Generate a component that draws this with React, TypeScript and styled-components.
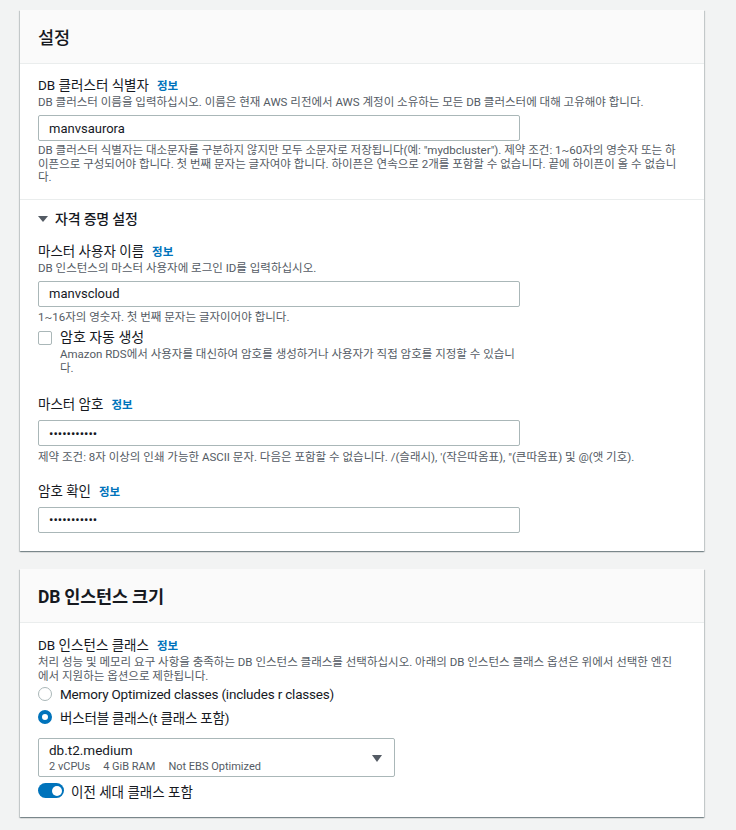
import React from 'react';
import styled, { createGlobalStyle } from 'styled-components';

const GlobalStyle = createGlobalStyle`
  html, body {
    margin: 0;
    padding: 0;
    background: #f2f3f3;
  }
  body {
    font-family: Roboto, 'Noto Sans CJK KR', sans-serif;
    color: #16191f;
  }
`;

const Page = styled.div`
  padding: 10px 32px 13px 20px;
  display: flex;
  flex-direction: column;
  gap: 18px;
`;

const Card = styled.section`
  background: #ffffff;
  box-shadow: 0 1px 1px 0 rgba(0, 28, 36, 0.3), 1px 1px 1px 0 rgba(0, 28, 36, 0.15),
    -1px 1px 1px 0 rgba(0, 28, 36, 0.15);
`;

const CardHeader = styled.header`
  height: 53px;
  background: #fafafa;
  border-bottom: 1px solid #eaeded;
  display: flex;
  align-items: center;
  padding: 0 18px;
`;

const CardTitle = styled.h2<{ light?: boolean }>`
  margin: 0;
  font-size: 17.5px;
  font-weight: ${p => (p.light ? 500 : 700)};
  letter-spacing: -0.2px;
`;

const Section = styled.div<{ divided?: boolean; top?: number; bottom?: number }>`
  padding: ${p => p.top ?? 12}px 18px ${p => p.bottom ?? 14}px;
  border-top: ${p => (p.divided ? '1px solid #eaeded' : 'none')};
`;

const Expander = styled.div`
  display: flex;
  align-items: center;
  gap: 7px;
  font-size: 14px;
  font-weight: 500;
  line-height: 20px;
  color: #16191f;
  letter-spacing: -0.2px;
`;

const Caret = styled.span`
  width: 0;
  height: 0;
  border-left: 5px solid transparent;
  border-right: 5px solid transparent;
  border-top: 6px solid #545b64;
`;

const Field = styled.div<{ gap?: number }>`
  margin-top: ${p => p.gap ?? 0}px;
  display: flex;
  flex-direction: column;
`;

const Label = styled.div`
  font-size: 13.5px;
  line-height: 18px;
  display: flex;
  align-items: baseline;
  gap: 8px;
`;

const Info = styled.a`
  font-size: 11.5px;
  font-weight: 700;
  color: #0073bb;
  text-decoration: none;
`;

const Desc = styled.div<{ wrap?: number }>`
  font-size: 11.5px;
  line-height: 14px;
  color: #545b64;
  max-width: ${p => p.wrap ?? 650}px;
`;

const Help = styled.div<{ wrap?: number; top?: number }>`
  margin-top: ${p => p.top ?? 4}px;
  font-size: 11.5px;
  line-height: 13.5px;
  color: #545b64;
  max-width: ${p => p.wrap ?? 650}px;
`;

const Input = styled.input`
  margin-top: 6px;
  box-sizing: border-box;
  width: 482px;
  height: 26px;
  border: 1px solid #aab7b8;
  border-radius: 2px;
  padding: 0 10px;
  font-family: Roboto, 'Noto Sans CJK KR', sans-serif;
  font-size: 13px;
  color: #16191f;
  outline: none;
`;

const CheckRow = styled.label`
  margin-top: 4px;
  display: flex;
  gap: 8px;
  align-items: flex-start;
`;

const Box = styled.span`
  margin-top: 3px;
  width: 14px;
  height: 14px;
  box-sizing: border-box;
  border: 1px solid #aab7b8;
  border-radius: 2px;
  flex-shrink: 0;
`;

const CheckText = styled.div`
  display: flex;
  flex-direction: column;
  width: 462px;
`;

const CheckLabel = styled.div`
  font-size: 14px;
  line-height: 18px;
`;

const Radios = styled.div`
  margin-top: 1px;
  display: flex;
  flex-direction: column;
  gap: 3px;
`;

const RadioRow = styled.label`
  display: flex;
  align-items: center;
  gap: 8px;
  height: 20px;
  font-size: 13.5px;
  letter-spacing: -0.2px;
`;

const Radio = styled.span<{ checked?: boolean }>`
  width: 14px;
  height: 14px;
  box-sizing: border-box;
  border-radius: 50%;
  border: ${p => (p.checked ? '4px solid #0073bb' : '1px solid #aab7b8')};
  background: #fff;
  flex-shrink: 0;
`;

const Select = styled.div`
  margin-top: 11px;
  box-sizing: border-box;
  width: 357px;
  height: 39px;
  border: 1px solid #aab7b8;
  border-radius: 2px;
  padding: 2px 10px 0;
  display: flex;
  align-items: center;
  justify-content: space-between;
`;

const SelectMain = styled.div`
  display: flex;
  flex-direction: column;
`;

const SelectValue = styled.div`
  font-size: 13.5px;
  line-height: 17px;
`;

const SelectMeta = styled.div`
  display: flex;
  gap: 13px;
  font-size: 11px;
  line-height: 16px;
  color: #545b64;
`;

const SelectArrow = styled.span`
  width: 0;
  height: 0;
  border-left: 5px solid transparent;
  border-right: 5px solid transparent;
  border-top: 7px solid #545b64;
  margin-right: 2px;
`;

const ToggleRow = styled.label`
  margin-top: 5px;
  display: flex;
  align-items: center;
  gap: 7px;
  height: 18px;
  font-size: 13.5px;
`;

const Track = styled.span<{ on?: boolean }>`
  width: 22px;
  height: 15px;
  border-radius: 8px;
  background: ${p => (p.on ? '#0073bb' : '#aab7b8')};
  display: flex;
  align-items: center;
  justify-content: ${p => (p.on ? 'flex-end' : 'flex-start')};
  padding: 0 2px;
`;

const Knob = styled.span`
  width: 10px;
  height: 10px;
  border-radius: 50%;
  background: #fff;
`;

export default function App() {
  return (
    <>
      <GlobalStyle />
      <Page>
        <Card>
          <CardHeader>
            <CardTitle light>설정</CardTitle>
          </CardHeader>
          <Section>
            <Field>
              <Label>
                DB 클러스터 식별자 <Info>정보</Info>
              </Label>
              <Desc>
                DB 클러스터 이름을 입력하십시오. 이름은 현재 AWS 리전에서 AWS 계정이 소유하는 모든 DB 클러스터에 대해 고유해야 합니다.
              </Desc>
              <Input defaultValue="manvsaurora" />
              <Help top={3}>
                DB 클러스터 식별자는 대소문자를 구분하지 않지만 모두 소문자로 저장됩니다(예: "mydbcluster"). 제약 조건: 1~60자의 영숫자 또는 하이픈으로 구성되어야 합니다. 첫 번째 문자는 글자여야 합니다. 하이픈은 연속으로 2개를 포함할 수 없습니다. 끝에 하이픈이 올 수 없습니다.
              </Help>
            </Field>
          </Section>
          <Section divided top={9} bottom={18}>
            <Expander>
              <Caret />
              자격 증명 설정
            </Expander>
            <Field gap={13}>
              <Label>
                마스터 사용자 이름 <Info>정보</Info>
              </Label>
              <Desc>DB 인스턴스의 마스터 사용자에 로그인 ID를 입력하십시오.</Desc>
              <Input defaultValue="manvscloud" />
              <Help>1~16자의 영숫자. 첫 번째 문자는 글자이어야 합니다.</Help>
            </Field>
            <CheckRow>
              <Box />
              <CheckText>
                <CheckLabel>암호 자동 생성</CheckLabel>
                <Help top={2}>
                  Amazon RDS에서 사용자를 대신하여 암호를 생성하거나 사용자가 직접 암호를 지정할 수 있습니다.
                </Help>
              </CheckText>
            </CheckRow>
            <Field gap={20}>
              <Label>
                마스터 암호 <Info>정보</Info>
              </Label>
              <Input type="password" defaultValue="manvscloud1" />
              <Help top={5}>
                제약 조건: 8자 이상의 인쇄 가능한 ASCII 문자. 다음은 포함할 수 없습니다. /(슬래시), '(작은따옴표), "(큰따옴표) 및 @(앳 기호).
              </Help>
            </Field>
            <Field gap={17}>
              <Label>
                암호 확인 <Info>정보</Info>
              </Label>
              <Input type="password" defaultValue="manvscloud1" />
            </Field>
          </Section>
        </Card>

        <Card>
          <CardHeader>
            <CardTitle>DB 인스턴스 크기</CardTitle>
          </CardHeader>
          <Section top={13} bottom={17}>
            <Field>
              <Label>
                DB 인스턴스 클래스 <Info>정보</Info>
              </Label>
              <Desc wrap={640}>
                처리 성능 및 메모리 요구 사항을 충족하는 DB 인스턴스 클래스를 선택하십시오. 아래의 DB 인스턴스 클래스 옵션은 위에서 선택한 엔진에서 지원하는 옵션으로 제한됩니다.
              </Desc>
            </Field>
            <Radios>
              <RadioRow>
                <Radio />
                Memory Optimized classes (includes r classes)
              </RadioRow>
              <RadioRow>
                <Radio checked />
                버스터블 클래스(t 클래스 포함)
              </RadioRow>
            </Radios>
            <Select>
              <SelectMain>
                <SelectValue>db.t2.medium</SelectValue>
                <SelectMeta>
                  <span>2 vCPUs</span>
                  <span>4 GiB RAM</span>
                  <span>Not EBS Optimized</span>
                </SelectMeta>
              </SelectMain>
              <SelectArrow />
            </Select>
            <ToggleRow>
              <Track on>
                <Knob />
              </Track>
              이전 세대 클래스 포함
            </ToggleRow>
          </Section>
        </Card>
      </Page>
    </>
  );
}
